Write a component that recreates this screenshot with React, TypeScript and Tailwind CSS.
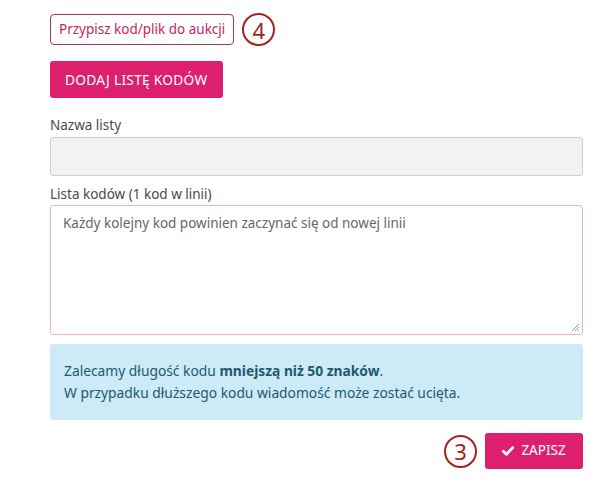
import React from "react";

export default function App() {
  return (
    <div className="w-[595px] h-[484px] bg-white pl-[50px] pr-[12px] pt-[14px] text-[14px] text-[#333]" style={{ fontFamily: '"Noto Sans", "Open Sans", sans-serif' }}>
      <div className="flex items-center gap-[8px] h-[31px]">
        <div className="h-[31px] px-[8px] flex items-center border border-[#9c3a55] rounded-[4px] text-[#c81f64] text-[13.5px] leading-none">
          Przypisz kod/plik do aukcji
        </div>
        <div className="w-[33px] h-[33px] rounded-full border-2 border-[#a3231f] flex items-center justify-center text-[#a3231f] text-[22px] leading-none">
          4
        </div>
      </div>
      <button className="mt-[16px] h-[37px] px-[15px] bg-[#de1f6e] text-white text-[13.7px] rounded-[3px] uppercase leading-none tracking-[0.3px]">
        DODAJ LISTĘ KODÓW
      </button>
      <div className="mt-[17px] text-[13.5px] leading-[20px] text-[#4a4a4a]">Nazwa listy</div>
      <div className="mt-[2px] h-[39px] bg-[#f2f2f2] border border-[#cfcfcf] rounded-[3px]" />
      <div className="mt-[8px] text-[13.5px] leading-[20px] text-[#4a4a4a]">Lista kodów (1 kod w linii)</div>
      <div className="relative mt-[1px] h-[130px] border border-[#e8b6c3] rounded-[3px] px-[12px] pt-[7px] text-[13.5px] text-[#666]">
        Każdy kolejny kod powinien zaczynać się od nowej linii
        <svg className="absolute right-[2px] bottom-[2px]" width="9" height="9" viewBox="0 0 9 9">
          <line x1="8" y1="1" x2="1" y2="8" stroke="#999" strokeWidth="1" />
          <line x1="8" y1="4" x2="4" y2="8" stroke="#999" strokeWidth="1" />
          <line x1="8" y1="7" x2="7" y2="8" stroke="#999" strokeWidth="1" />
        </svg>
      </div>
      <div className="mt-[9px] h-[76px] bg-[#cdebf6] rounded-[3px] px-[14px] flex flex-col justify-center text-[#1c5a70] text-[13.8px] leading-[22px]">
        <div>
          Zalecamy długość kodu <b className="font-bold">mniejszą niż 50 znaków</b>.
        </div>
        <div>W przypadku dłuższego kodu wiadomość może zostać ucięta.</div>
      </div>
      <div className="mt-[13px] flex justify-end items-center gap-[8px]">
        <div className="w-[33px] h-[33px] rounded-full border-2 border-[#a3231f] flex items-center justify-center text-[#a3231f] text-[22px] leading-none">
          3
        </div>
        <button className="h-[36px] w-[98px] bg-[#de1f6e] text-white text-[13.5px] rounded-[3px] flex items-center justify-center gap-[7px] leading-none">
          <svg width="12" height="10" viewBox="0 0 12 10">
            <path d="M1.3 5.2 L4.4 8.2 L10.8 1.6" stroke="white" strokeWidth="2.8" fill="none" strokeLinecap="round" strokeLinejoin="round" />
          </svg>
          ZAPISZ
        </button>
      </div>
    </div>
  );
}
